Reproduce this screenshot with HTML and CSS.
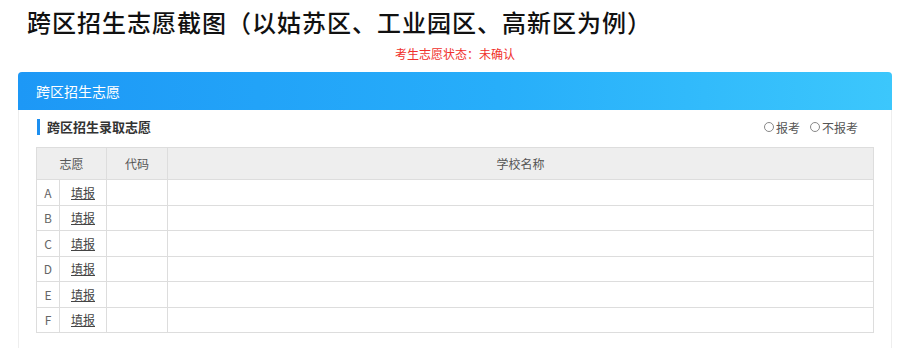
FILE: index.html
```html
<!DOCTYPE html>
<html lang="zh-CN">
<head>
<meta charset="utf-8">
<title>跨区招生志愿截图</title>
<link rel="stylesheet" href="styles.css">
</head>
<body>
<h1 class="page-title">跨区招生志愿截图（以姑苏区、工业园区、高新区为例）</h1>
<div class="card">
  <p class="status">考生志愿状态：未确认</p>
  <div class="panel">
    <div class="panel-head">跨区招生志愿</div>
    <div class="panel-body">
      <div class="sub-row">
        <h2 class="sub-title">跨区招生录取志愿</h2>
        <div class="radios">
          <label class="radio"><span class="dot"></span>报考</label>
          <label class="radio"><span class="dot"></span>不报考</label>
        </div>
      </div>
      <table class="grid">
        <colgroup>
          <col class="c-letter"><col class="c-fill"><col class="c-code"><col>
        </colgroup>
        <thead>
          <tr><th colspan="2">志愿</th><th>代码</th><th>学校名称</th></tr>
        </thead>
        <tbody>
          <tr><td class="letter">A</td><td><a class="fill">填报</a></td><td></td><td></td></tr>
          <tr><td class="letter">B</td><td><a class="fill">填报</a></td><td></td><td></td></tr>
          <tr><td class="letter">C</td><td><a class="fill">填报</a></td><td></td><td></td></tr>
          <tr><td class="letter">D</td><td><a class="fill">填报</a></td><td></td><td></td></tr>
          <tr><td class="letter">E</td><td><a class="fill">填报</a></td><td></td><td></td></tr>
          <tr><td class="letter">F</td><td><a class="fill">填报</a></td><td></td><td></td></tr>
        </tbody>
      </table>
    </div>
  </div>
</div>
</body>
</html>
```
FILE: styles.css
```css
html, body {
  margin: 0;
  padding: 0;
  background: #fff;
  font-family: "Noto Sans CJK SC", "Noto Sans", sans-serif;
}
body {
  height: 348px;
  overflow: hidden;
}
.page-title {
  margin: 7px 0 0 27px;
  font-size: 24px;
  line-height: 30px;
  font-weight: 500;
  color: #111;
  letter-spacing: 1px;
}
.card {
  width: 874px;
  margin-left: 18px;
}
.status {
  margin: 9px 0 10px;
  text-align: center;
  font-size: 12px;
  line-height: 16px;
  color: #f0302c;
}
.panel {
  box-sizing: border-box;
  border: 1px solid #eeeeee;
  border-top: none;
  border-bottom: none;
  border-radius: 4px 4px 0 0;
  height: 276px;
}
.panel-head {
  height: 38px;
  margin: 0 -1px;
  border-radius: 4px 4px 0 0;
  background: linear-gradient(90deg, #1d98f6 0%, #27aefa 55%, #3cc7fc 100%);
  color: #fff;
  font-size: 14px;
  line-height: 38px;
  padding-left: 18px;
}
.panel-body {
  padding: 7px 17px 0 17px;
}
.sub-row {
  display: flex;
  align-items: center;
  justify-content: space-between;
  height: 20px;
}
.sub-title {
  margin: 0 0 0 1px;
  font-size: 13px;
  font-weight: 700;
  color: #333;
  border-left: 3px solid #1d8ff0;
  padding-left: 7px;
  line-height: 16px;
}
.radios {
  display: flex;
  gap: 10px;
  margin-right: 16px;
  font-size: 12px;
  color: #555;
}
.radio {
  display: flex;
  align-items: center;
  gap: 2px;
}
.dot {
  width: 8px;
  height: 8px;
  border: 1px solid #888;
  border-radius: 50%;
  background: #fff;
}
.grid {
  margin-top: 10px;
  width: 838px;
  border-collapse: collapse;
  font-size: 12px;
  color: #555;
  table-layout: fixed;
}
.c-letter { width: 23px; }
.c-fill { width: 47px; }
.c-code { width: 61px; }
.grid th {
  height: 31px;
  background: #eeeeee;
  font-weight: 400;
  border: 1px solid #dddddd;
  color: #555;
  padding: 0;
}
.grid td {
  height: 24.5px;
  border: 1px solid #dddddd;
  text-align: center;
  padding: 0;
}
.letter {
  color: #666;
}
.fill {
  color: #444;
  text-decoration: underline;
}
```
